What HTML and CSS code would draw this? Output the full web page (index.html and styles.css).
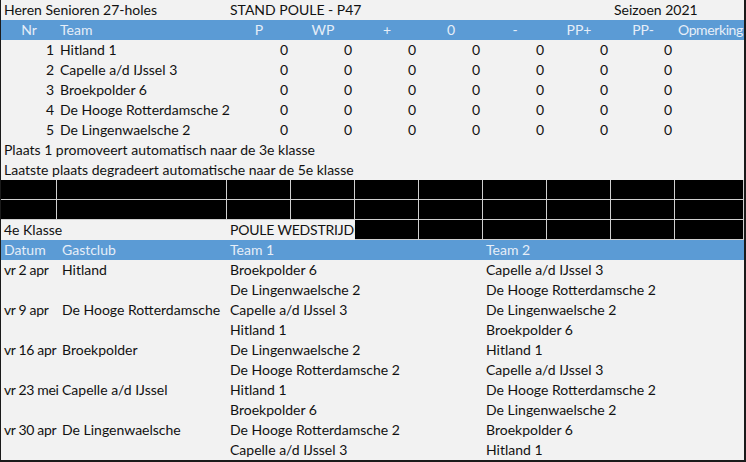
FILE: index.html
```html
<!DOCTYPE html>
<html lang="nl">
<head>
<meta charset="utf-8">
<title>Stand Poule P47</title>
<link rel="stylesheet" href="styles.css">
</head>
<body>
<div class="sheet">
  <!-- title row -->
  <div class="c span2">Heren Senioren 27-holes</div>
  <div class="c title-mid">STAND POULE - P47</div>
  <div class="c title-right">Seizoen 2021</div>

  <!-- header -->
  <div class="c hd ctr">Nr</div>
  <div class="c hd">Team</div>
  <div class="c hd ctr">P</div>
  <div class="c hd ctr">WP</div>
  <div class="c hd ctr">+</div>
  <div class="c hd ctr">0</div>
  <div class="c hd ctr">-</div>
  <div class="c hd ctr">PP+</div>
  <div class="c hd ctr">PP-</div>
  <div class="c hd clip">Opmerking</div>

  <!-- standings -->
  <div class="c num">1</div><div class="c">Hitland 1</div>
  <div class="c num">0</div><div class="c num">0</div><div class="c num">0</div><div class="c num">0</div><div class="c num">0</div><div class="c num">0</div><div class="c num">0</div><div class="c"></div>

  <div class="c num">2</div><div class="c">Capelle a/d IJssel 3</div>
  <div class="c num">0</div><div class="c num">0</div><div class="c num">0</div><div class="c num">0</div><div class="c num">0</div><div class="c num">0</div><div class="c num">0</div><div class="c"></div>

  <div class="c num">3</div><div class="c">Broekpolder 6</div>
  <div class="c num">0</div><div class="c num">0</div><div class="c num">0</div><div class="c num">0</div><div class="c num">0</div><div class="c num">0</div><div class="c num">0</div><div class="c"></div>

  <div class="c num">4</div><div class="c">De Hooge Rotterdamsche 2</div>
  <div class="c num">0</div><div class="c num">0</div><div class="c num">0</div><div class="c num">0</div><div class="c num">0</div><div class="c num">0</div><div class="c num">0</div><div class="c"></div>

  <div class="c num">5</div><div class="c">De Lingenwaelsche 2</div>
  <div class="c num">0</div><div class="c num">0</div><div class="c num">0</div><div class="c num">0</div><div class="c num">0</div><div class="c num">0</div><div class="c num">0</div><div class="c"></div>

  <!-- notes -->
  <div class="c full">Plaats 1 promoveert automatisch naar de 3e klasse</div>
  <div class="c full">Laatste plaats degradeert automatische naar de 5e klasse</div>

  <!-- black rows -->
  <div class="blk"></div><div class="blk"></div><div class="blk"></div><div class="blk"></div><div class="blk"></div><div class="blk"></div><div class="blk"></div><div class="blk"></div><div class="blk"></div><div class="blk"></div>
  <div class="blk"></div><div class="blk"></div><div class="blk"></div><div class="blk"></div><div class="blk"></div><div class="blk"></div><div class="blk"></div><div class="blk"></div><div class="blk"></div><div class="blk"></div>

  <!-- poule row -->
  <div class="c span2">4e Klasse</div>
  <div class="c span2 tight">POULE WEDSTRIJDEN</div>
  <div class="blk"></div><div class="blk"></div><div class="blk"></div><div class="blk"></div><div class="blk"></div><div class="blk"></div>

  <!-- schedule header -->
  <div class="c hd">Datum</div>
  <div class="c hd gast">Gastclub</div>
  <div class="c hd span4">Team 1</div>
  <div class="c hd span4">Team 2</div>

  <!-- schedule -->
  <div class="c date">vr 2 apr</div><div class="c gast">Hitland</div><div class="c span4">Broekpolder 6</div><div class="c span4">Capelle a/d IJssel 3</div>
  <div class="c"></div><div class="c"></div><div class="c span4">De Lingenwaelsche 2</div><div class="c span4">De Hooge Rotterdamsche 2</div>
  <div class="c date">vr 9 apr</div><div class="c gast">De Hooge Rotterdamsche</div><div class="c span4">Capelle a/d IJssel 3</div><div class="c span4">De Lingenwaelsche 2</div>
  <div class="c"></div><div class="c"></div><div class="c span4">Hitland 1</div><div class="c span4">Broekpolder 6</div>
  <div class="c date">vr 16 apr</div><div class="c gast">Broekpolder</div><div class="c span4">De Lingenwaelsche 2</div><div class="c span4">Hitland 1</div>
  <div class="c"></div><div class="c"></div><div class="c span4">De Hooge Rotterdamsche 2</div><div class="c span4">Capelle a/d IJssel 3</div>
  <div class="c date">vr 23 mei</div><div class="c gast">Capelle a/d IJssel</div><div class="c span4">Hitland 1</div><div class="c span4">De Hooge Rotterdamsche 2</div>
  <div class="c"></div><div class="c"></div><div class="c span4">Broekpolder 6</div><div class="c span4">De Lingenwaelsche 2</div>
  <div class="c date">vr 30 apr</div><div class="c gast">De Lingenwaelsche</div><div class="c span4">De Hooge Rotterdamsche 2</div><div class="c span4">Broekpolder 6</div>
  <div class="c"></div><div class="c"></div><div class="c span4">Capelle a/d IJssel 3</div><div class="c span4">Hitland 1</div>
</div>
</body>
</html>
```
FILE: styles.css
```css
html, body {
  margin: 0;
  padding: 0;
  background: #f2f2f2;
}

.sheet {
  width: 746px;
  height: 462px;
  box-sizing: border-box;
  border-left: 1px solid #1a1a1a;
  border-right: 2px solid #1a1a1a;
  border-bottom: 2px solid #1a1a1a;
  background: #f2f2f2;
  display: grid;
  grid-template-columns: 56px 170px repeat(7, 64px) 69px;
  grid-auto-rows: 20px;
  overflow: hidden;
  font-family: Lato, "Open Sans", sans-serif;
  font-size: 14px;
  line-height: 20px;
  color: #111;
}

.c {
  padding: 0 3px;
  white-space: nowrap;
  overflow: visible;
  min-width: 0;
}

.span2 { grid-column: span 2; }
.span4 { grid-column: span 4; }
.full { grid-column: 1 / -1; }
.title-mid { grid-column: 3 / span 4; }
.title-right { grid-column: 9 / span 2; }

.hd {
  background: #5b9bd5;
  color: #e6eef8;
}

.ctr { text-align: center; }
.num { text-align: right; }
.clip {
  overflow: hidden;
  letter-spacing: -0.4px;
}
.gast { padding-left: 5px; }
.date { letter-spacing: -0.35px; }
.tight { letter-spacing: -0.2px; }

.blk {
  background: #000;
  box-sizing: border-box;
  border-right: 1px solid #d0d0d0;
  border-bottom: 1px solid #d0d0d0;
}
```
